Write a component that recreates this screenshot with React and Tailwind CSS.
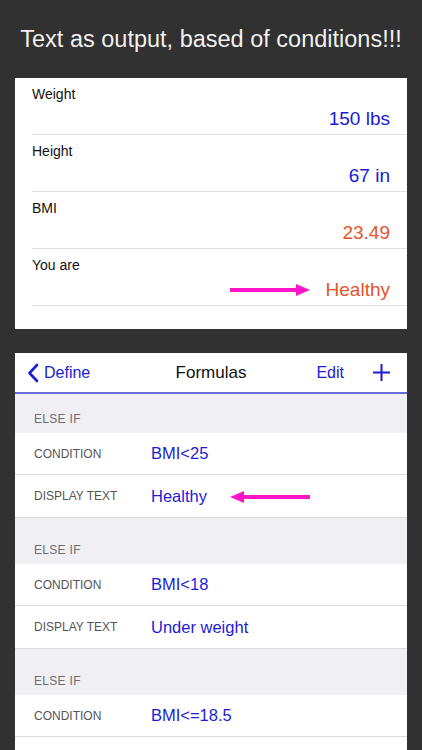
import React from 'react';

const font = { fontFamily: '"Liberation Sans", Arial, sans-serif' };

function ArrowRight() {
    return (
        <svg width="80" height="12" viewBox="0 0 80 12" className="mr-[16px]">
            <rect x="0" y="4" width="68" height="4" fill="#ff14c8" />
            <polygon points="66,0 80,6 66,12" fill="#ff14c8" />
        </svg>
    );
}

function ArrowLeft() {
    return (
        <svg width="80" height="12" viewBox="0 0 80 12">
            <rect x="12" y="4" width="68" height="4" fill="#ff14c8" />
            <polygon points="14,0 0,6 14,12" fill="#ff14c8" />
        </svg>
    );
}

function ResultRow({ label, value, color, arrow }) {
    return (
        <div className="h-[57px] ml-[17px] border-b border-[#e2e2e2] flex flex-col pr-[17px]">
            <div className="text-[14px] text-[#111] pt-[7px] leading-[18px]">{label}</div>
            <div className="flex items-center justify-end mt-[4px]">
                {arrow && <ArrowRight />}
                <span className={`text-[19px] leading-[24px] ${color}`}>{value}</span>
            </div>
        </div>
    );
}

function Section({ rows, tall }) {
    return (
        <div>
            <div className={`bg-[#efeff4] flex items-end pl-[19px] pb-[5px] ${tall ? 'h-[46px]' : 'h-[39px]'}`}>
                <span className="text-[12px] text-[#6d6d72] tracking-wide">ELSE IF</span>
            </div>
            {rows.map((r, i) => (
                <div key={i} className={`${i === 0 ? 'h-[42px]' : 'h-[43px]'} bg-white border-b border-[#dcdce0] flex items-center`}>
                    <span className="w-[136px] pl-[19px] text-[12px] text-[#555]">{r.label}</span>
                    <span className="text-[16.5px] text-[#1c1cd6]">{r.value}</span>
                    {r.arrow && <span className="ml-[23px] mt-[2px] flex"><ArrowLeft /></span>}
                </div>
            ))}
        </div>
    );
}

export default function App() {
    return (
        <div className="w-[422px] h-[750px] overflow-hidden bg-[#313131]" style={font}>
            <h1 className="text-white/95 text-[23.5px] text-center pt-[24px] leading-[30px] font-light">
                Text as output, based of conditions!!!
            </h1>

            <div className="mx-[15px] mt-[24px] bg-white h-[251px]">
                <ResultRow label="Weight" value="150 lbs" color="text-[#1a1ad9]" />
                <ResultRow label="Height" value="67 in" color="text-[#1a1ad9]" />
                <ResultRow label="BMI" value="23.49" color="text-[#e8532c]" />
                <ResultRow label="You are" value="Healthy" color="text-[#e8532c]" arrow />
            </div>

            <div className="mx-[15px] mt-[24px] bg-[#efeff4] h-[400px]">
                <div className="h-[41px] bg-white border-b-2 border-[#6b6be0] flex items-center justify-between pl-[12px] pr-[16px] relative">
                    <div className="flex items-center text-[#1c1cd6] text-[16px]">
                        <svg width="12" height="20" viewBox="0 0 12 20" className="mr-[5px]">
                            <path d="M10 2 L2.5 10 L10 18" stroke="#1c1cd6" strokeWidth="2.6" fill="none" strokeLinecap="round" strokeLinejoin="round" />
                        </svg>
                        Define
                    </div>
                    <span className="absolute left-0 right-0 text-center text-[17px] text-[#111] pointer-events-none">Formulas</span>
                    <div className="flex items-center gap-[28px] text-[#1c1cd6] text-[16px]">
                        <span>Edit</span>
                        <svg width="19" height="19" viewBox="0 0 19 19">
                            <path d="M9.5 1 V18 M1 9.5 H18" stroke="#1c1cd6" strokeWidth="2" />
                        </svg>
                    </div>
                </div>
                <Section rows={[
                    { label: 'CONDITION', value: 'BMI<25' },
                    { label: 'DISPLAY TEXT', value: 'Healthy', arrow: true },
                ]} />
                <Section tall rows={[
                    { label: 'CONDITION', value: 'BMI<18' },
                    { label: 'DISPLAY TEXT', value: 'Under weight' },
                ]} />
                <Section tall rows={[
                    { label: 'CONDITION', value: 'BMI<=18.5' },
                    { label: '', value: '' },
                ]} />
            </div>
        </div>
    );
}
